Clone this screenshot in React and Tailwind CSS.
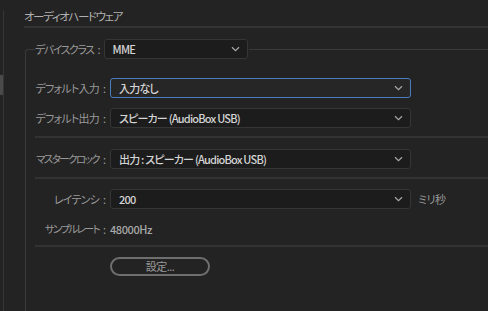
import React from 'react'

// ── Shared font stack (proportional kana via palt)
const FONT = "font-['Noto_Sans_CJK_JP','Noto_Sans',sans-serif] [font-feature-settings:'palt']"

function Chevron() {
  return (
    <svg width="9" height="6" viewBox="0 0 9 6" fill="none" stroke="#a8a8a8" strokeWidth="1.2">
      <path d="M1 1.2l3.5 3.4L8 1.2" />
    </svg>
  )
}

function Dropdown({ value, focused = false, className = '' }) {
  return (
    <div
      className={`h-[20px] flex items-center justify-between pl-[8px] pr-[7px] rounded-[3px] border ${
        focused ? 'border-[#4a7dbd] bg-[#262626]' : 'border-[#353535] bg-[#1c1c1c]'
      } ${className}`}
    >
      <span className="text-[11px] leading-none text-[#d4d4d4] font-medium tracking-[-0.8px] whitespace-nowrap">{value}</span>
      <Chevron />
    </div>
  )
}

// Label + half-width colon, right-aligned so long labels grow leftward
function Label({ text, fit = 'tracking-[-0.8px]', className = '' }) {
  return (
    <span className={`flex items-center text-[11px] leading-none text-[#9a9a9a] whitespace-nowrap ${className}`}>
      <span className={fit}>{text}</span>
      <span className="ml-[4px]">:</span>
    </span>
  )
}

function Row({ label, fit, children, className = '' }) {
  return (
    <div className={`flex items-center ${className}`}>
      <div className="w-[75px] shrink-0 flex justify-end pr-[4px]">
        <Label text={label} fit={fit} />
      </div>
      {children}
    </div>
  )
}

export default function App() {
  return (
    <div className={`w-[488px] h-[311px] bg-[#232323] flex overflow-hidden ${FONT}`}>

      {/* Left edge — scroll gutter */}
      <div className="w-[4px] shrink-0 border-r border-[#363636] mt-[10px] flex flex-col">
        <div className="mt-[65px] h-[20px] w-[3px] bg-[#4a4a4a]" />
      </div>

      {/* Main */}
      <div className="flex-1 pl-[20px] flex flex-col">

        {/* Section title */}
        <div className="pt-[11px] h-[28px] text-[11.5px] leading-none text-[#b0b0b0] tracking-[-1.4px] border-b-2 border-[#333333]">
          オーディオハードウェア
        </div>

        {/* Group box */}
        <fieldset className="mt-[11px] ml-[1px] flex-1 border-l border-t border-[#3a3a3a] rounded-tl-[3px]">
          <legend className="ml-[9px] pr-[1px] flex items-center">
            <Label text="デバイスクラス" fit="tracking-[-1.5px]" className="pr-[3px]" />
            <Dropdown value="MME" className="w-[144px]" />
          </legend>

          <div className="pl-[9px] pt-[19px] flex flex-col">
            <Row label="デフォルト入力">
              <Dropdown value="入力なし" focused className="w-[301px]" />
            </Row>
            <Row label="デフォルト出力" className="mt-[10px]">
              <Dropdown value="スピーカー (AudioBox USB)" className="w-[301px]" />
            </Row>

            <div className="mt-[8px] h-[2px] bg-[#333333]" />

            <Row label="マスタークロック" fit="text-[10.5px] tracking-[-1.6px]" className="mt-[11px]">
              <Dropdown value="出力 : スピーカー (AudioBox USB)" className="w-[301px]" />
            </Row>

            <div className="mt-[8px] h-[2px] bg-[#333333]" />

            <Row label="レイテンシ" className="mt-[10px]">
              <Dropdown value="200" className="w-[301px]" />
              <span className="ml-[7px] text-[11px] leading-none text-[#9a9a9a] tracking-[-0.5px]">ミリ秒</span>
            </Row>
            <Row label="サンプルレート" fit="text-[10.5px] tracking-[-1.7px]" className="mt-[15px]">
              <span className="text-[11px] leading-none text-[#a8a8a8] font-medium tracking-[-0.4px]">48000Hz</span>
            </Row>

            <div className="mt-[10px] h-[2px] bg-[#333333]" />

            <div className="mt-[10px] pl-[75px]">
              <button className="w-[100px] h-[19px] rounded-full border-2 border-[#6e6e6e] text-[11px] leading-none text-[#9a9a9a] tracking-[-0.5px] flex items-center justify-center">
                設定...
              </button>
            </div>
          </div>
        </fieldset>

      </div>
    </div>
  )
}
